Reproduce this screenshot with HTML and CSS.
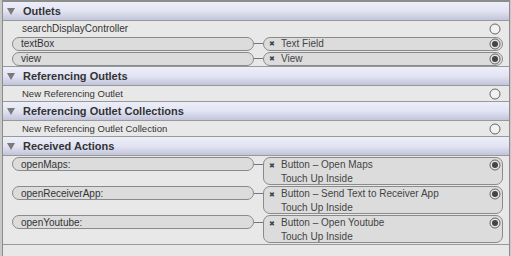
FILE: index.html
```html
<!DOCTYPE html>
<html lang="en">
<head>
    <meta charset="UTF-8">
    <title>Connections</title>
    <link rel="stylesheet" href="styles.css">
</head>
<body>
    <div class="panel">
        <div class="section">
            <div class="header"><span class="arrow"></span>Outlets</div>
            <div class="row">
                <span class="plain">searchDisplayController</span>
                <svg class="dot" width="12" height="12" viewBox="0 0 12 12"><circle cx="6" cy="6" r="5" fill="#f2f2f2" stroke="#666" stroke-width="1"/></svg>
            </div>
            <div class="row">
                <span class="pill left">textBox</span>
                <span class="wire"></span>
                <span class="pill right"><span class="x">&#x2716;</span>Text Field
                    <svg class="dot" width="12" height="12" viewBox="0 0 12 12"><circle cx="6" cy="6" r="5" fill="#e4e4e4" stroke="#666"/><circle cx="6" cy="6" r="3" fill="#444"/></svg>
                </span>
            </div>
            <div class="row">
                <span class="pill left">view</span>
                <span class="wire"></span>
                <span class="pill right"><span class="x">&#x2716;</span>View
                    <svg class="dot" width="12" height="12" viewBox="0 0 12 12"><circle cx="6" cy="6" r="5" fill="#e4e4e4" stroke="#666"/><circle cx="6" cy="6" r="3" fill="#444"/></svg>
                </span>
            </div>
        </div>
        <div class="section">
            <div class="header"><span class="arrow"></span>Referencing Outlets</div>
            <div class="row small">
                <span class="plain">New Referencing Outlet</span>
                <svg class="dot" width="12" height="12" viewBox="0 0 12 12"><circle cx="6" cy="6" r="5" fill="#f2f2f2" stroke="#666"/></svg>
            </div>
        </div>
        <div class="section">
            <div class="header"><span class="arrow"></span>Referencing Outlet Collections</div>
            <div class="row small">
                <span class="plain">New Referencing Outlet Collection</span>
                <svg class="dot" width="12" height="12" viewBox="0 0 12 12"><circle cx="6" cy="6" r="5" fill="#f2f2f2" stroke="#666"/></svg>
            </div>
        </div>
        <div class="section">
            <div class="header"><span class="arrow"></span>Received Actions</div>
            <div class="actions">
                <div class="action">
                    <span class="pill left">openMaps:</span>
                    <span class="wire"></span>
                    <div class="box">
                        <div><span class="x">&#x2716;</span>Button &ndash; Open Maps</div>
                        <div class="event">Touch Up Inside</div>
                        <svg class="dot" width="12" height="12" viewBox="0 0 12 12"><circle cx="6" cy="6" r="5" fill="#e4e4e4" stroke="#666"/><circle cx="6" cy="6" r="3" fill="#444"/></svg>
                    </div>
                </div>
                <div class="action">
                    <span class="pill left">openReceiverApp:</span>
                    <span class="wire"></span>
                    <div class="box">
                        <div><span class="x">&#x2716;</span>Button &ndash; Send Text to Receiver App</div>
                        <div class="event">Touch Up Inside</div>
                        <svg class="dot" width="12" height="12" viewBox="0 0 12 12"><circle cx="6" cy="6" r="5" fill="#e4e4e4" stroke="#666"/><circle cx="6" cy="6" r="3" fill="#444"/></svg>
                    </div>
                </div>
                <div class="action">
                    <span class="pill left">openYoutube:</span>
                    <span class="wire"></span>
                    <div class="box">
                        <div><span class="x">&#x2716;</span>Button &ndash; Open Youtube</div>
                        <div class="event">Touch Up Inside</div>
                        <svg class="dot" width="12" height="12" viewBox="0 0 12 12"><circle cx="6" cy="6" r="5" fill="#e4e4e4" stroke="#666"/><circle cx="6" cy="6" r="3" fill="#444"/></svg>
                    </div>
                </div>
            </div>
        </div>
        <div class="empty"></div>
    </div>
</body>
</html>
```
FILE: styles.css
```css
body {
    margin: 0;
    background: #c8c8c8;
    font-family: "Liberation Sans", Arial, sans-serif;
    font-size: 10px;
    color: #333;
}
.panel {
    width: 506px;
    height: 254px;
    margin-left: 2px;
    border-top: 2px solid #8c8c8c;
    border-left: 1px solid #8c8c8c;
    border-right: 1px solid #8c8c8c;
    background: #e8e8e8;
    overflow: hidden;
}
.header {
    height: 18px;
    display: flex;
    align-items: center;
    padding-left: 4px;
    background: linear-gradient(#eceef9, #e2e4f3 50%, #c2c5da);
    border-bottom: 1px solid #999;
    font-weight: bold;
    font-size: 11px;
    color: #333;
}
.arrow {
    width: 0;
    height: 0;
    border-left: 4px solid transparent;
    border-right: 4px solid transparent;
    border-top: 7px solid #7a7a7a;
    margin-right: 8px;
}
.section {
    border-bottom: 1px solid #999;
}
.row {
    height: 15px;
    display: flex;
    align-items: center;
    font-size: 10px;
}
.row.small {
    font-size: 9.5px;
}
.plain {
    padding-left: 19px;
    flex: 1;
}
.row > .dot {
    margin-right: 8px;
}
.pill {
    height: 12px;
    border: 1px solid #8a8a8a;
    border-radius: 7px;
    background: #dcdcdc;
    display: flex;
    align-items: center;
}
.pill.left {
    width: 232px;
    margin-left: 9px;
    padding-left: 8px;
}
.wire {
    width: 9px;
    height: 1px;
    background: #777;
}
.pill.right {
    flex: 1;
    margin-right: 6px;
    padding-left: 5px;
    color: #444;
}
.pill.right .dot {
    margin-left: auto;
    margin-right: 1px;
}
.x {
    font-size: 7px;
    margin-right: 6px;
    color: #444;
}
.actions {
    padding-top: 1px;
}
.action {
    height: 29px;
    display: flex;
    align-items: flex-start;
}
.action .wire {
    margin-top: 7px;
}
.action .box {
    flex: 1;
    height: 26px;
    margin-right: 6px;
    padding-left: 5px;
    border: 1px solid #8a8a8a;
    border-radius: 7px;
    background: #dcdcdc;
    color: #444;
    font-size: 10px;
    line-height: 13px;
    position: relative;
}
.box .event {
    padding-left: 12px;
}
.box .dot {
    position: absolute;
    right: 1px;
    top: 1px;
}
.empty {
    height: 14px;
}
```
